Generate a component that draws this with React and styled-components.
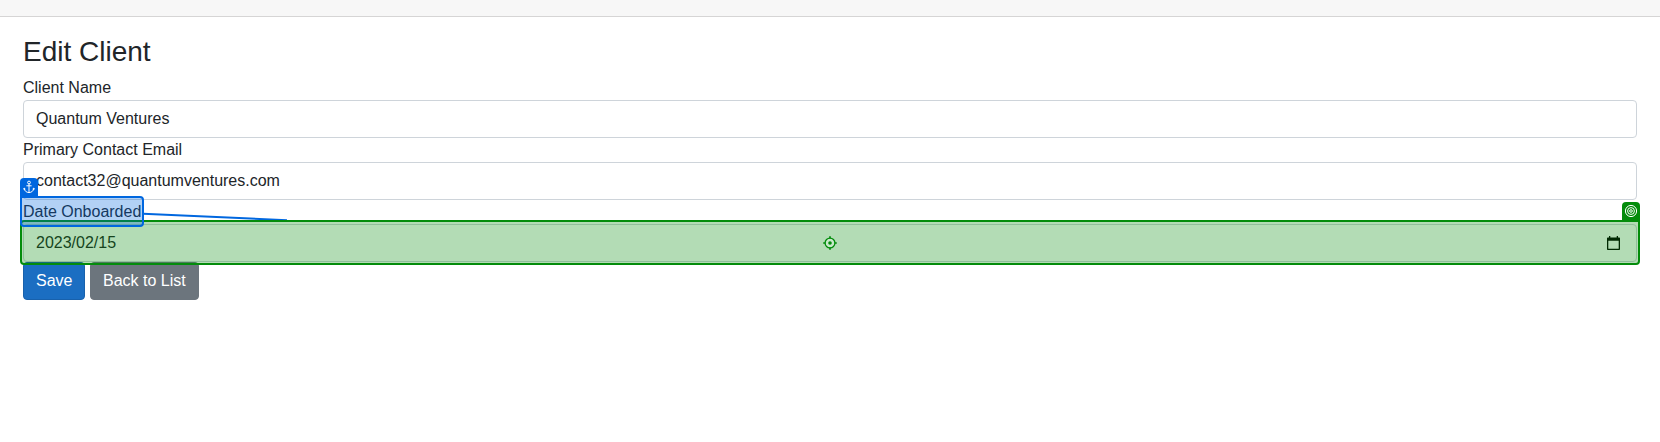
import React from 'react';
import styled, { createGlobalStyle } from 'styled-components';

const BLUE = '#0067df';
const GREEN = '#038c0b';

const GlobalStyle = createGlobalStyle`
  *, *::before, *::after { box-sizing: border-box; }
  body {
    margin: 0;
    background: #fff;
    color: #212529;
    font: 400 16px/1.5 "Liberation Sans", Arial, sans-serif;
    overflow: hidden;
  }
`;

const TopBar = styled.header`
  height: 17px;
  background: #f7f7f7;
  border-bottom: 1px solid #d6d5d5;
`;

const Content = styled.main`
  padding: 18px 23px 0;
`;

const Title = styled.h3`
  margin: 0 0 7px;
  font-size: 28px;
  font-weight: 400;
  line-height: 34px;
`;

const Field = styled.div`
  display: flex;
  flex-direction: column;
  align-items: flex-start;
`;

const Label = styled.label`
  position: relative;
  height: 24px;
  line-height: 24px;
`;

const ControlWrap = styled.div`
  position: relative;
  width: 100%;
`;

const Control = styled.div`
  display: flex;
  align-items: center;
  justify-content: space-between;
  height: 38px;
  padding: 0 12px;
  border: 1px solid #ced4da;
  border-radius: 4px;
  background: #fff;
`;

const CalendarIcon = styled.svg`
  display: block;
  margin-right: 4px;
`;

const CrosshairIcon = styled.svg`
  display: block;
  margin-top: 1px;
`;

const Actions = styled.div`
  display: flex;
  gap: 4.5px;
`;

const Button = styled.button`
  height: 38px;
  padding: 6px 12px;
  border: 1px solid ${(p) => (p.$primary ? '#1861ac' : '#6c757d')};
  border-radius: 4px;
  background: ${(p) => (p.$primary ? '#1b6ec2' : '#6c757d')};
  color: #fff;
  font: inherit;
  line-height: 24px;
`;

const Highlight = styled.div`
  position: absolute;
  inset: ${(p) => p.$inset};
  z-index: ${(p) => p.$level};
  display: flex;
  align-items: center;
  justify-content: center;
  border: 2px solid ${(p) => p.$color};
  border-radius: ${(p) => (p.$tagSide === 'left' ? '0 4px 4px 4px' : '4px 0 4px 4px')};
  background: ${(p) => p.$fill};
`;

const Tag = styled.div`
  position: absolute;
  bottom: calc(100% + 2px);
  ${(p) => p.$side}: -2px;
  display: flex;
  align-items: center;
  justify-content: center;
  width: 18px;
  height: 18px;
  border-radius: 4px 4px 0 0;
  background: ${(p) => p.$color};
`;

const Connector = styled.svg`
  position: absolute;
  left: 120px;
  top: 12px;
  z-index: 1;
  overflow: hidden;
`;

const Anchor = () => (
  <svg width="12" height="14" viewBox="0 0 12 14" fill="none" stroke="#fff" strokeWidth="1">
    <circle cx="6" cy="2.5" r="1.4" />
    <path d="M6 3.9V12.6M3.4 5.8h5.2M1.2 8.2C1.4 11 3.4 12.4 6 12.6C8.6 12.4 10.6 11 10.8 8.2M.4 9.4L1.2 8.1L2.4 9M11.6 9.4L10.8 8.1L9.6 9" />
  </svg>
);

const Rings = () => (
  <svg width="14" height="14" viewBox="0 0 14 14" fill="none" stroke="#fff">
    <circle cx="7" cy="7" r="5.6" />
    <circle cx="7" cy="7" r="3.4" />
    <circle cx="7" cy="7" r="1.3" />
  </svg>
);

const Crosshair = () => (
  <CrosshairIcon width="14" height="14" viewBox="0 0 14 14" fill="none" stroke={GREEN} strokeWidth="1.3">
    <circle cx="7" cy="7" r="4.9" fill="#c8e8ca" />
    <circle cx="7" cy="7" r="1.8" fill={GREEN} stroke="none" />
    <path d="M7 .2v2.2M7 11.6v2.2M.2 7h2.2M11.6 7h2.2" strokeWidth="1.7" />
  </CrosshairIcon>
);

const Calendar = () => (
  <CalendarIcon width="13" height="14" viewBox="0 0 13 14">
    <path d="M2 0h1.3v1.5h6.4V0H11v1.5h1.2q.8 0 .8.8v10.9q0 .8-.8.8H.8q-.8 0-.8-.8V2.3q0-.8.8-.8H2zM1.3 4.8v7.9h10.4V4.8z" fill="#000" fillRule="evenodd" />
  </CalendarIcon>
);

export default function App() {
  return (
    <>
      <GlobalStyle />
      <TopBar />
      <Content>
        <Title>Edit Client</Title>
        <Field>
          <Label>Client Name</Label>
          <ControlWrap><Control>Quantum Ventures</Control></ControlWrap>
        </Field>
        <Field>
          <Label>Primary Contact Email</Label>
          <ControlWrap><Control>contact32@quantumventures.com</Control></ControlWrap>
        </Field>
        <Field>
          <Label>
            Date Onboarded
            <Highlight $inset="-4px -3px -3px -3px" $level={3} $color={BLUE} $fill="rgba(0,103,223,.3)" $tagSide="left">
              <Tag $side="left" $color={BLUE}><Anchor /></Tag>
            </Highlight>
            <Connector width="144" height="8" viewBox="0 0 144 8">
              <path d="M0 1.8L144 8.2" stroke={BLUE} strokeWidth="2" />
            </Connector>
          </Label>
          <ControlWrap>
            <Control>
              2023/02/15
              <Calendar />
            </Control>
            <Highlight $inset="-4px -3px -3px -3px" $level={2} $color={GREEN} $fill="rgba(3,140,11,.3)" $tagSide="right">
              <Tag $side="right" $color={GREEN}><Rings /></Tag>
              <Crosshair />
            </Highlight>
          </ControlWrap>
        </Field>
        <Actions>
          <Button $primary>Save</Button>
          <Button>Back to List</Button>
        </Actions>
      </Content>
    </>
  );
}
